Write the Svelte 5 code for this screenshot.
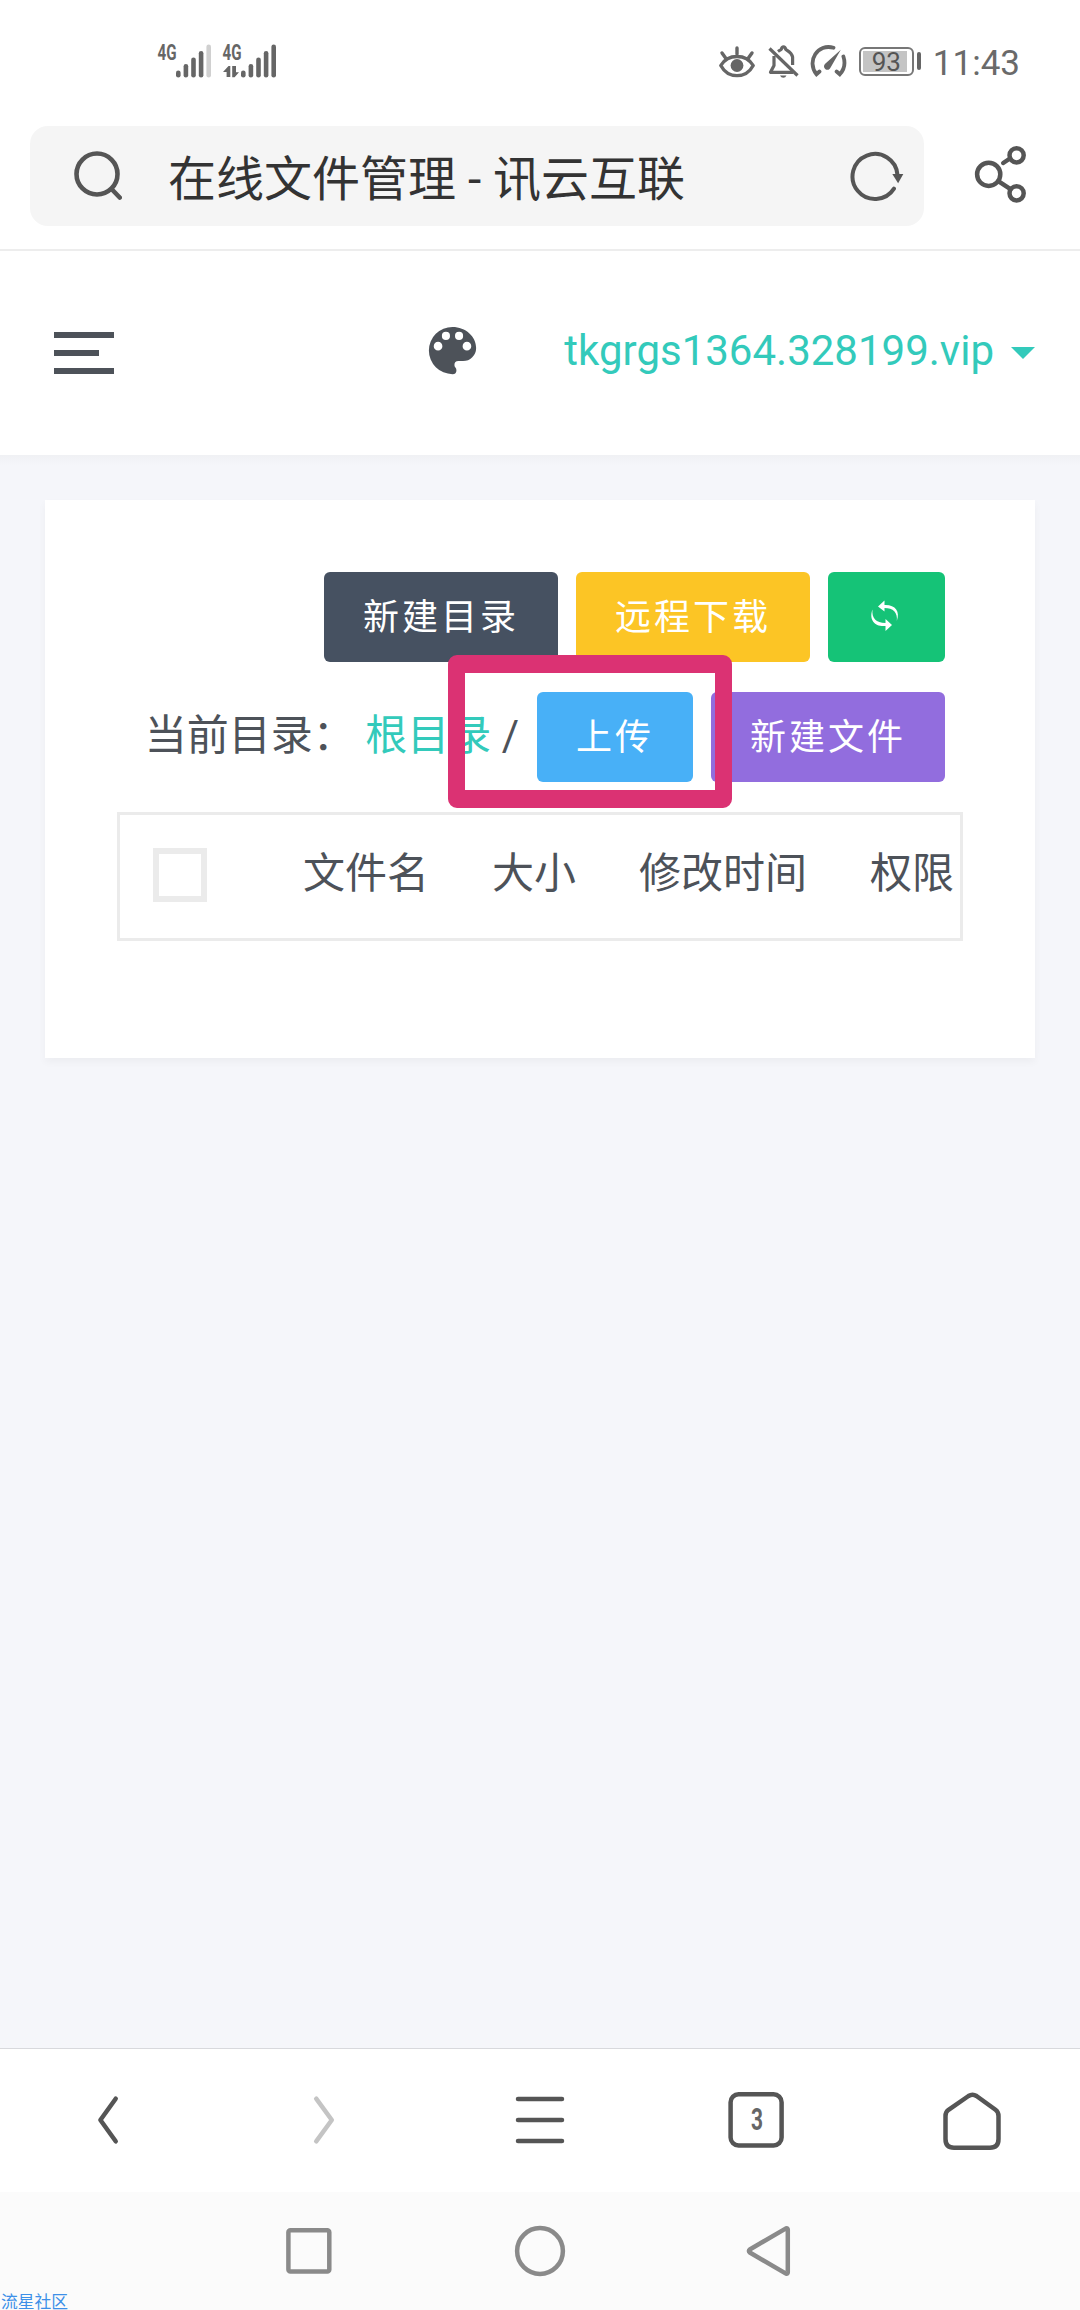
<script>
    let title = "在线文件管理 - 讯云互联"
    let host = "tkgrgs1364.328199.vip"
    let time = "11:43"
    let battery = 93
    let tabCount = 3
    let allChecked = false

    // signal bar heights, shared by both SIM cards
    const bars = [7, 13.5, 20, 26.5, 33]
    const columns = ["文件名", "大小", "修改时间", "权限"]
</script>

<div class="screen">
    <div class="status">
        <div class="signals">
            <svg width="56" height="40" viewBox="0 0 56 40">
                <text x="0.5" y="19" class="net" textLength="19" lengthAdjust="spacingAndGlyphs">4G</text>
                {#each bars as h, i}
                    <rect x={19 + i * 7.6} y={36.5 - h} width="4.6" height={h} rx="2.3" class:off={i === 4} />
                {/each}
            </svg>
            <svg width="56" height="40" viewBox="0 0 56 40">
                <text x="0.5" y="19" class="net" textLength="19" lengthAdjust="spacingAndGlyphs">4G</text>
                <path d="M1 31L6.5 25h1.8v11H4.6V31zM10.2 25H14v6.2h3L12.6 36.3h-2.4z" />
                {#each bars as h, i}
                    <rect x={19 + i * 7.6} y={36.5 - h} width="4.6" height={h} rx="2.3" />
                {/each}
            </svg>
        </div>
        <div class="indicators">
            <svg class="eye" width="36" height="40" viewBox="0 0 36 40" fill="none" stroke="#666" stroke-width="3.4" stroke-linecap="round">
                <path d="M1.8 24.5C9 12.500 27 12.500 34.200 24.500C27 38 9 38 1.800 24.500z" stroke-linejoin="round" />
                <path d="M18 7v6M3 12l3.600 5M33 12l-3.600 5" />
                <circle cx="18" cy="24.500" r="6.400" fill="#666" stroke="none" />
            </svg>
            <svg class="bell" width="32" height="40" viewBox="0 0 32 40" fill="none" stroke="#666" stroke-width="3.200">
                <path d="M1.500 7.500L29.500 34.500" />
                <path d="M6 15v9.500L2.500 31.300H25M10 10.500c2-1.500 3.200-1.600 3.400-2.400.6-3 3.600-3 4.200 0 .2.800 6 2.500 7 8v8" stroke-linejoin="round" />
                <path d="M12 34.500h6.500q-1 2.300-3.200 2.300t-3.300-2.300z" fill="#666" stroke="none" />
            </svg>
            <svg class="gauge" width="38" height="40" viewBox="0 0 38 40" fill="none" stroke="#666" stroke-width="3.800" stroke-linecap="round">
                <path d="M24.500 6.800C9 2 -3 20 7.500 33.300L10.500 30.500M34.400 15.500C36.500 22 35.200 28.500 30.800 33.300L27.600 30.500" />
                <path d="M31.800 8.800L21.600 26.500A3.400 3.400 0 1 1 16.200 22.800z" fill="#666" stroke="none" />
            </svg>
            <div class="battery">
                <div class="cell"><div class="charge" style="width: {battery}%"></div><span>{battery}</span></div>
                <i></i>
            </div>
            <span class="time">{time}</span>
        </div>
    </div>

    <div class="address">
        <div class="field">
            <svg width="50" height="50" viewBox="0 0 50 50" fill="none" stroke="#555" stroke-width="4.6" stroke-linecap="round">
                <circle cx="25" cy="23" r="20.500" />
                <path d="M40.500 39l7.200 7.500" />
            </svg>
            <span class="title">{title}</span>
            <svg width="58" height="52" viewBox="0 0 58 52" fill="none" stroke="#555" stroke-width="4" stroke-linecap="round">
                <path d="M48.500 25A22.500 22.500 0 1 0 45 38.600" />
                <path d="M43.300 24h11l-5.200 9.300z" fill="#555" stroke="none" />
            </svg>
        </div>
        <svg class="share" width="56" height="60" viewBox="0 0 56 60" fill="none" stroke="#555" stroke-width="4.5" stroke-linecap="round">
            <circle cx="16.700" cy="30.300" r="11.600" />
            <circle cx="44.600" cy="11.300" r="7.100" />
            <circle cx="44.600" cy="49.300" r="7.100" />
            <path d="M31.200 19l6-4M27 37.700l11.500 7.500" />
        </svg>
    </div>

    <header class="topbar">
        <div class="burger"><i></i><i></i><i></i></div>
        <svg class="palette" width="63" height="63" viewBox="0 0 24 24">
            <path fill="#4d5259" d="M17.500 12a1.650 1.650 0 1 1 0-3.300a1.650 1.650 0 0 1 0 3.300zM14.500 8a1.550 1.550 0 1 1 0-3.100a1.550 1.550 0 0 1 0 3.100zM9.500 8a1.550 1.550 0 1 1 0-3.100a1.550 1.550 0 0 1 0 3.100zM6.500 12a1.650 1.650 0 1 1 0-3.300a1.650 1.650 0 0 1 0 3.300zM12 3a9 9 0 0 0 0 18a1.500 1.500 0 0 0 1.500-1.500c0-.390-.150-.740-.390-1c-.230-.270-.380-.620-.380-1a1.500 1.500 0 0 1 1.500-1.500H16a5 5 0 0 0 5-5c0-4.420-4.030-8-9-8z" />
        </svg>
        <div class="host">{host}<i class="caret"></i></div>
    </header>

    <main class="content">
        <div class="card">
            <div class="actions">
                <button class="btn dark">新建目录</button>
                <button class="btn yellow">远程下载</button>
                <button class="btn green" aria-label="refresh">
                    <svg width="36" height="36" viewBox="0 0 36 36" fill="#fff">
                        <path d="M5.500 10.500C1.500 21 8 28 18.500 27V32L25 26L18.500 20V24C9 24 4.500 19 5.500 10.500z" />
                        <path d="M29.800 22C33.500 12 28 5.500 17.500 6V1.500L11 7.500L17.500 12.500V9C26 9 31 13.500 29.800 22z" />
                    </svg>
                </button>
            </div>
            <div class="actions">
                <div class="crumbs">当前目录： <a href="#root">根目录</a> /</div>
                <div class="upload">
                    <button class="btn blue">上传</button>
                    <div class="marker"></div>
                </div>
                <button class="btn purple">新建文件</button>
            </div>
            <div class="table">
                <input type="checkbox" bind:checked={allChecked} />
                {#each columns as column}
                    <span>{column}</span>
                {/each}
            </div>
        </div>
    </main>

    <nav class="browser">
        <svg width="60" height="60" viewBox="0 0 60 60"><path d="M37.700 8.700L22.400 30l15.300 21.300" /></svg>
        <svg width="60" height="60" viewBox="0 0 60 60" class="disabled"><path d="M22.200 8.700L37.800 30L22.200 51.300" /></svg>
        <svg width="60" height="60" viewBox="0 0 60 60"><path d="M8 9h44M8 30h44M8 51h44" /></svg>
        <svg width="60" height="60" viewBox="0 0 60 60">
            <rect x="4.600" y="4.200" width="51" height="51.200" rx="8" />
            <text x="25" y="40" textLength="12" lengthAdjust="spacingAndGlyphs">{tabCount}</text>
        </svg>
        <svg width="60" height="60" viewBox="0 0 60 60">
            <path d="M26.500 6Q30.500 3.400 34.500 6L53.500 19.800Q56.500 22 56.500 26V49Q56.500 57.700 48 57.700H12Q3.500 57.700 3.500 49V26Q3.500 22 6.500 19.800z" />
        </svg>
    </nav>

    <nav class="system">
        <svg width="60" height="60" viewBox="0 0 60 60"><rect x="8.400" y="9.300" width="40.900" height="41.200" rx="2" /></svg>
        <svg width="60" height="60" viewBox="0 0 60 60"><circle cx="30" cy="30" r="22.900" /></svg>
        <svg width="60" height="60" viewBox="0 0 60 60"><path d="M9.800 28.500L46 7.400Q47.800 6.800 47.800 8.800V51.200Q47.800 53.200 46 52.600L9.800 31.500Q8 30 9.800 28.500z" /></svg>
        <span class="watermark">流星社区</span>
    </nav>
</div>

<style>
    :global(body) {
        font-family: Roboto, "Noto Sans CJK SC", sans-serif;
    }
    .screen {
        display: flex;
        flex-direction: column;
        width: 1080px;
        height: 2310px;
        overflow: hidden;
        background: #fff;
        color: #4d5259;
    }
    .screen * {
        box-sizing: border-box;
    }
    svg {
        display: block;
        flex: none;
    }

    .status {
        display: flex;
        justify-content: space-between;
        height: 126px;
        padding: 41px 60px 0 157px;
    }
    .signals {
        display: flex;
        gap: 9px;
        fill: #666;
    }
    .net {
        font-size: 22px;
        font-weight: 700;
    }
    .off {
        fill: #d0d0d0;
    }
    .indicators {
        display: flex;
        align-items: flex-start;
    }
    .bell {
        margin-left: 13px;
    }
    .gauge {
        margin-left: 9px;
    }
    .battery {
        display: flex;
        align-items: center;
        gap: 3px;
        height: 28px;
        margin: 6px 12px 0;
    }
    .cell {
        position: relative;
        width: 55px;
        height: 29px;
        padding: 2px;
        border: 2px solid #777;
        border-radius: 6px;
    }
    .charge {
        height: 21px;
        background: #c4c4c4;
    }
    .cell span {
        position: absolute;
        inset: 0;
        font-size: 26px;
        line-height: 26px;
        text-align: center;
        color: #555;
    }
    .battery i {
        width: 4px;
        height: 18px;
        border-radius: 2px;
        background: #666;
    }
    .time {
        font-size: 35px;
        line-height: 46px;
        color: #6a6a6a;
    }

    .address {
        display: flex;
        height: 125px;
        padding-left: 30px;
        border-bottom: 2px solid #ededed;
    }
    .field {
        display: flex;
        align-items: center;
        width: 894px;
        height: 100px;
        padding: 0 17px 0 42px;
        border-radius: 18px;
        background: #f5f5f5;
    }
    .title {
        flex: 1;
        padding-top: 7px;
        margin-left: 46px;
        font-size: 48px;
        line-height: 70px;
        color: #333;
    }
    .share {
        margin: 18px 0 0 48px;
    }

    .topbar {
        display: flex;
        align-items: center;
        height: 204px;
        flex: none;
        padding: 0 45px 4px 54px;
    }
    .burger {
        display: flex;
        flex-direction: column;
        gap: 12px;
        margin-top: 4px;
    }
    .burger i {
        width: 60px;
        height: 6px;
        background: #4d5259;
    }
    .burger i:nth-child(2) {
        width: 45px;
    }
    .palette {
        margin: 0 0 2px 307px;
    }
    .host {
        display: flex;
        align-items: center;
        margin-left: auto;
        font-size: 42px;
        line-height: 60px;
        color: #33cabb;
    }
    .caret {
        margin: 3px 0 0 17px;
        border: 12px solid transparent;
        border-top-color: #33cabb;
        border-bottom: 0;
    }

    .content {
        flex: 1;
        padding: 45px;
        background: linear-gradient(#f0f1f4, #f5f6fa 10px);
    }
    .card {
        height: 558px;
        padding: 72px;
        background: #fff;
        box-shadow: 0 4px 8px rgba(0, 0, 0, 0.04);
    }
    .actions {
        display: flex;
        justify-content: flex-end;
        gap: 18px;
        padding: 0 18px 0 31px;
        margin-bottom: 30px;
    }
    .btn {
        height: 90px;
        padding: 2px 39px 0;
        border: 0;
        border-radius: 6px;
        font-family: inherit;
        font-size: 36px;
        line-height: 88px;
        letter-spacing: 3px;
        white-space: nowrap;
        color: #fff;
    }
    .dark { background: #465161; }
    .yellow { background: #fcc525; }
    .green {
        width: 117px;
        padding-top: 0;
        background: #15c377;
    }
    .blue { background: #48b0f7; }
    .purple { background: #926dde; }
    .crumbs {
        flex: 1;
        padding-top: 2px;
        font-size: 42px;
        line-height: 84px;
        white-space: nowrap;
    }
    .crumbs a {
        color: #33cabb;
        text-decoration: none;
    }
    .upload {
        position: relative;
    }
    .marker {
        position: absolute;
        top: -37px;
        left: -89px;
        width: 284px;
        height: 153px;
        border: 18px solid #db3273;
        border-width: 18px 17px;
        border-radius: 9px;
    }
    .table {
        display: flex;
        height: 129px;
        padding: 0 0 5px 33px;
        border: 3px solid #ebebeb;
        align-items: center;
        gap: 63px;
        font-size: 42px;
        line-height: 60px;
        white-space: nowrap;
    }
    input {
        appearance: none;
        flex: none;
        width: 54px;
        height: 54px;
        margin: 2px 33px 0 0;
        border: 6px solid #ebebeb;
    }

    nav {
        display: flex;
        flex: none;
        fill: none;
        stroke-linecap: round;
        stroke-linejoin: round;
        stroke-width: 4.5;
    }
    .browser {
        height: 144px;
        justify-content: space-around;
        align-items: center;
        padding-bottom: 2px;
        border-top: 1px solid #d8d9dd;
        stroke: #555;
    }
    .browser text {
        font-size: 32px;
        font-weight: 700;
        fill: #666;
        stroke: none;
    }
    .disabled {
        stroke: #c4c4c4;
    }
    .system {
        position: relative;
        height: 118px;
        justify-content: center;
        align-items: center;
        gap: 170px;
        background: #fbfbfb;
        stroke: #8a8a8a;
    }
    .watermark {
        position: absolute;
        left: 1px;
        bottom: 0;
        font-size: 16.8px;
        line-height: 16px;
        color: #3d90e8;
    }
</style>
